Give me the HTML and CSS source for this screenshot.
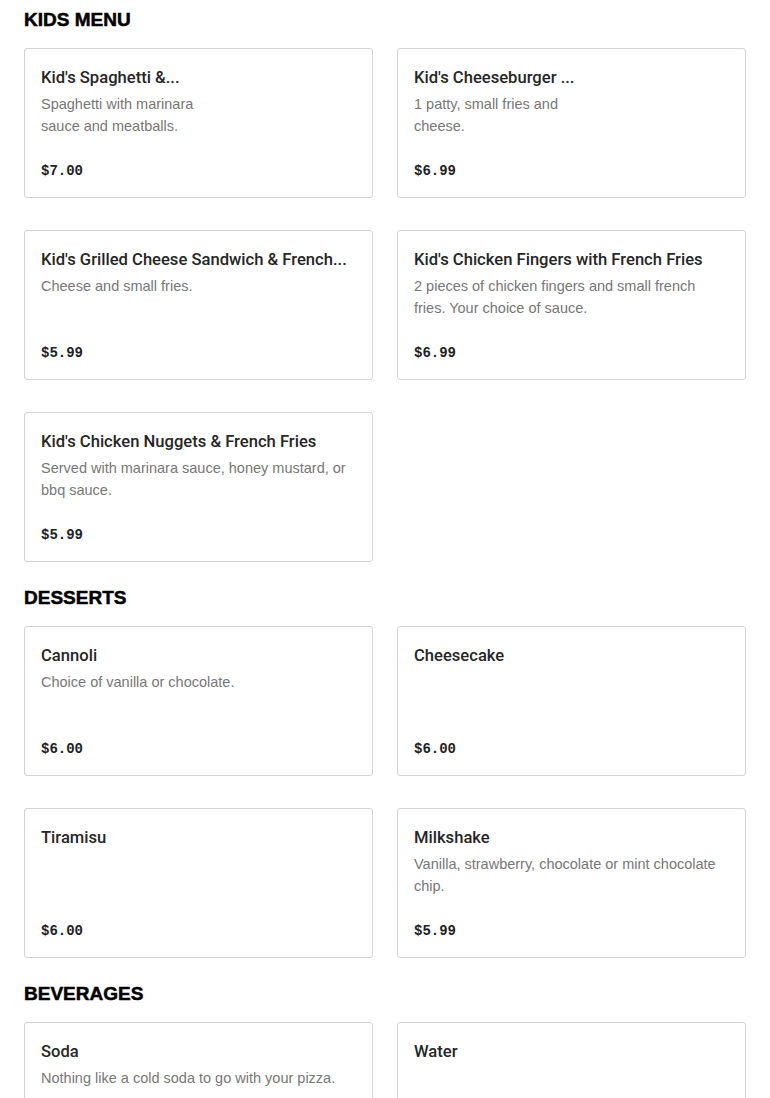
FILE: index.html
```html
<!DOCTYPE html>
<html lang="en">
<head>
<meta charset="utf-8">
<title>Menu</title>
<link rel="stylesheet" href="styles.css">
</head>
<body>
<main class="menu">
  <section class="section">
    <h2 class="section-title">KIDS MENU</h2>
    <div class="grid">
      <article class="card card--narrow">
        <h3 class="card-title">Kid's Spaghetti &amp;...</h3>
        <p class="card-desc">Spaghetti with marinara sauce and meatballs.</p>
        <p class="card-price">$7.00</p>
      </article>
      <article class="card card--narrow">
        <h3 class="card-title">Kid's Cheeseburger ...</h3>
        <p class="card-desc">1 patty, small fries and cheese.</p>
        <p class="card-price">$6.99</p>
      </article>
      <article class="card">
        <h3 class="card-title">Kid's Grilled Cheese Sandwich &amp; French...</h3>
        <p class="card-desc">Cheese and small fries.</p>
        <p class="card-price">$5.99</p>
      </article>
      <article class="card">
        <h3 class="card-title">Kid's Chicken Fingers with French Fries</h3>
        <p class="card-desc">2 pieces of chicken fingers and small french fries. Your choice of sauce.</p>
        <p class="card-price">$6.99</p>
      </article>
      <article class="card">
        <h3 class="card-title">Kid's Chicken Nuggets &amp; French Fries</h3>
        <p class="card-desc">Served with marinara sauce, honey mustard, or bbq sauce.</p>
        <p class="card-price">$5.99</p>
      </article>
    </div>
  </section>
  <section class="section">
    <h2 class="section-title">DESSERTS</h2>
    <div class="grid">
      <article class="card">
        <h3 class="card-title">Cannoli</h3>
        <p class="card-desc">Choice of vanilla or chocolate.</p>
        <p class="card-price">$6.00</p>
      </article>
      <article class="card">
        <h3 class="card-title">Cheesecake</h3>
        <p class="card-price">$6.00</p>
      </article>
      <article class="card">
        <h3 class="card-title">Tiramisu</h3>
        <p class="card-price">$6.00</p>
      </article>
      <article class="card">
        <h3 class="card-title">Milkshake</h3>
        <p class="card-desc">Vanilla, strawberry, chocolate or mint chocolate chip.</p>
        <p class="card-price">$5.99</p>
      </article>
    </div>
  </section>
  <section class="section">
    <h2 class="section-title">BEVERAGES</h2>
    <div class="grid">
      <article class="card">
        <h3 class="card-title">Soda</h3>
        <p class="card-desc">Nothing like a cold soda to go with your pizza.</p>
        <p class="card-price">$2.50</p>
      </article>
      <article class="card">
        <h3 class="card-title">Water</h3>
        <p class="card-price">$1.50</p>
      </article>
    </div>
  </section>
</main>
</body>
</html>
```

FILE: styles.css
```css
* { box-sizing: border-box; }
html, body { margin: 0; padding: 0; background: #fff; }
body {
  font-family: "Liberation Sans", Arial, sans-serif;
  color: #222;
}
.menu {
  padding: 8px 24px 24px;
  display: flex;
  flex-direction: column;
  gap: 24px;
}
.section-title {
  margin: 0 0 16px;
  font-size: 19px;
  line-height: 24px;
  font-weight: 900;
  color: #000;
  -webkit-text-stroke: 0.5px #000;
}
.grid {
  display: grid;
  grid-template-columns: 1fr 1fr;
  column-gap: 24px;
  row-gap: 32px;
}
.card {
  height: 150px;
  border: 1px solid #d3d3d3;
  border-radius: 3px;
  padding: 17px 16px 15px;
  display: flex;
  flex-direction: column;
  overflow: hidden;
}
.card-title {
  margin: 0;
  font-family: Roboto, "Liberation Sans", sans-serif;
  font-size: 16.6px;
  line-height: 24px;
  font-weight: 500;
  color: #262626;
  white-space: nowrap;
  overflow: hidden;
  text-overflow: ellipsis;
}
.card-desc {
  margin: 3px 0 0;
  font-size: 14.5px;
  line-height: 22px;
  color: #777;
}
.card--narrow .card-desc { max-width: 170px; }
.card-price {
  margin: auto 0 0;
  font-family: "Liberation Mono", "Courier New", monospace;
  font-size: 14px;
  line-height: 22px;
  font-weight: 700;
  color: #222;
}
```
